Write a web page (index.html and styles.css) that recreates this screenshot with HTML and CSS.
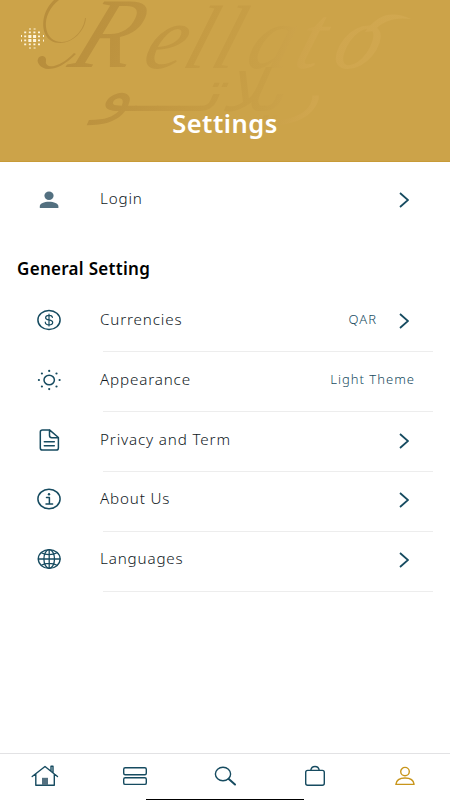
FILE: index.html
```html
<!DOCTYPE html>
<html lang="en">
<head>
<meta charset="utf-8">
<meta name="viewport" content="width=device-width">
<title>Settings</title>
<link rel="stylesheet" href="styles.css">
</head>
<body>
<header class="hero">
  <svg class="watermark" viewBox="0 0 450 161" aria-hidden="true">
    <defs>
      <linearGradient id="fade" gradientUnits="userSpaceOnUse" x1="30" y1="0" x2="420" y2="0">
        <stop offset="0" stop-color="#b78d3b"/>
        <stop offset=".22" stop-color="#be9440"/>
        <stop offset=".4" stop-color="#c59b43"/>
        <stop offset=".6" stop-color="#c9a047"/>
        <stop offset=".72" stop-color="#d0a64e"/>
        <stop offset="1" stop-color="#d1a850"/>
      </linearGradient>
    </defs>
    <g fill="url(#fade)">
      <path d="M86 18C85 31 73 43 60 43C46 43 41 30 44 17C46 9 50 4 54 0H59C50 7 45 17 46 27C47 36 53 42 62 42C73 42 84 30 85 18ZM76 54C65 65 56 69 48 69C41 69 36 62 38 59C40 54 47 56 46 61C45 65 49 67 54 66C62 64 68 59 74 53Z"/>
      <text class="latin initial" transform="translate(0 67) skewX(-23)" x="66">R</text>
      <text class="latin" transform="translate(0 68) skewX(-18)"><tspan x="140">e</tspan><tspan x="180">l</tspan><tspan x="208">l</tspan><tspan x="243">a</tspan><tspan x="291">t</tspan><tspan x="329">o</tspan></text>
      <path d="M365 32C377 15 391 10 411 19C396 17 383 20 374 31Z"/>
      <text class="arabic" transform="translate(0 111) skewX(-24)" x="96" textLength="222" lengthAdjust="spacingAndGlyphs">ريلاتـــو</text>
    </g>
  </svg>
  <svg class="dots" viewBox="0 0 23 21" stroke="#fff5dc" stroke-dasharray="2 2.6" fill="none" aria-hidden="true">
    <path stroke-width="1" d="M8 1H17M8 20H17M.5 7V16M22.5 7V16"/>
    <path stroke-width="1.8" d="M3.2 4.4H20M3.2 8.3H20M3.2 12.4H20M3.2 16.4H20"/>
    <path stroke-width="3" stroke-dasharray="3 1.7" d="M7.4 8.4H16M7.4 12.5H16"/>
  </svg>
  <h1>Settings</h1>
</header>
<main>
  <a class="row login">
    <svg class="icon" viewBox="0 0 24 22"><g fill="#537080"><ellipse cx="12" cy="6.8" rx="4.6" ry="4.2"/><path d="M2.8 18.9V17C3 14.5 7 12.8 12 12.8S21 14.5 21.4 17V18.9Z"/></g></svg>
    <span class="label">Login</span>
    <svg class="chevron" viewBox="0 0 10 16"><path d="M1 1L9 8L1 15"/></svg>
  </a>
  <h2>General Setting</h2>
  <div class="row">
    <svg class="icon" viewBox="0 0 24 22"><ellipse cx="12" cy="11" rx="11.1" ry="9.6"/><path stroke-width="1.2" d="M15.4 8.3C15.1 6.9 13.9 6.4 12 6.4C10 6.4 8.6 7.2 8.6 8.7C8.6 12 15.7 9.9 15.7 13.4C15.7 15 14.2 15.8 12 15.8C9.8 15.8 8.4 14.9 8.3 13.2M12 5V17"/></svg>
    <span class="label">Currencies</span><span class="value">QAR</span>
    <svg class="chevron" viewBox="0 0 10 16"><path d="M1 1L9 8L1 15"/></svg>
  </div>
  <div class="row">
    <svg class="icon" viewBox="0 0 24 22"><ellipse cx="12.2" cy="11" rx="5.2" ry="4.7"/><g fill="#164b60" stroke="none"><circle cx="12.2" cy="1.9" r="1.1"/><circle cx="12.2" cy="20.1" r="1.1"/><circle cx="1.9" cy="11" r="1.1"/><circle cx="22.6" cy="11" r="1.1"/><circle cx="4.9" cy="4.5" r="1.1"/><circle cx="19.5" cy="4.5" r="1.1"/><circle cx="4.9" cy="17.5" r="1.1"/><circle cx="19.5" cy="17.5" r="1.1"/></g></svg>
    <span class="label">Appearance</span><span class="value last">Light Theme</span>
  </div>
  <div class="row">
    <svg class="icon" viewBox="0 0 24 22"><path d="M12.5 .9H5.5Q3.3 .9 3.3 3V19Q3.3 21.1 5.5 21.1H19.2Q21.4 21.1 21.4 19V8.5L12.5 .9V6.5Q12.5 8.7 14.8 8.7H21.2M7.3 12.8H17.3M7.3 16.8H17.3"/></svg>
    <span class="label">Privacy and Term</span>
    <svg class="chevron" viewBox="0 0 10 16"><path d="M1 1L9 8L1 15"/></svg>
  </div>
  <div class="row">
    <svg class="icon" viewBox="0 0 24 22"><ellipse cx="12" cy="11" rx="11.1" ry="9.7"/><path d="M9.5 9.6H12.4V15.9M9 16H15.6"/><circle cx="12" cy="6.2" r="1.2" fill="#164b60" stroke="none"/></svg>
    <span class="label">About Us</span>
    <svg class="chevron" viewBox="0 0 10 16"><path d="M1 1L9 8L1 15"/></svg>
  </div>
  <div class="row">
    <svg class="icon" viewBox="0 0 24 22"><g stroke-width="1.3"><ellipse cx="12.2" cy="11" rx="10.9" ry="9.4"/><ellipse cx="12.2" cy="11" rx="5.3" ry="9.4"/><path d="M12.2 1.6V20.4M1.3 11H23.1M4.4 4.7C8 7.2 16 7.2 20 4.7M4.4 17.3C8 14.8 16 14.8 20 17.3"/></g></svg>
    <span class="label">Languages</span>
    <svg class="chevron" viewBox="0 0 10 16"><path d="M1 1L9 8L1 15"/></svg>
  </div>
</main>
<nav class="tabs">
  <a><svg viewBox="0 0 28 22"><path d="M1.2 11.5L14 1.5L26.5 11.5M4.8 9V20.2H23.3V9M20 6V1.3H22V7.5"/><path fill="#537080" stroke="none" d="M11 20.2V12.8H17V20.2Z"/></svg></a>
  <a><svg viewBox="0 0 28 22"><rect x="2.7" y="2.7" width="22.6" height="7" rx="1.5"/><rect x="2.7" y="12.7" width="22.6" height="6.7" rx="1.5"/></svg></a>
  <a><svg viewBox="0 0 28 22"><ellipse cx="12" cy="9" rx="7.6" ry="6.8"/><path d="M17.5 13.8L24 19.5" stroke-width="2"/></svg></a>
  <a><svg viewBox="0 0 28 22"><rect x="4.7" y="5.4" width="18.6" height="14.9" rx="2"/><path d="M9.8 5.3C10.2 2.8 11.8 1.5 14 1.5S17.8 2.8 18.2 5.3"/></svg></a>
  <a><svg class="active" viewBox="0 0 28 22"><ellipse cx="14" cy="6.6" rx="4.3" ry="4.2"/><path d="M4.9 19.4C5.3 15.5 8.8 13 14 13S22.7 15.5 23.1 19.4Z"/></svg></a>
</nav>
<div class="home-indicator"></div>
</body>
</html>
```

FILE: styles.css
```css
* { box-sizing: border-box; }
body {
  margin: 0;
  height: 800px;
  display: flex;
  flex-direction: column;
  position: relative;
  overflow: hidden;
  background: #fff;
  color: #11191e;
  font-family: "Noto Sans", "Open Sans", sans-serif;
}
svg { display: block; fill: none; }
.hero {
  height: 161.5px;
  flex: none;
  position: relative;
  background: #cca349;
  border-bottom: 1px solid #c89b37;
}
.watermark { position: absolute; top: 0; left: 0; width: 450px; height: 161px; }
.latin { font: italic 90px "Liberation Serif", serif; }
.initial { font-size: 100px; }
.arabic { font: 58px "DejaVu Sans", sans-serif; }
.dots { position: absolute; left: 21px; top: 28px; width: 23px; height: 21px; }
h1 {
  position: relative;
  margin: 0;
  padding-top: 106px;
  text-align: center;
  color: #fff;
  font-size: 25.5px;
  line-height: 34px;
  font-weight: 600;
  letter-spacing: .5px;
}
main { flex: 1; }
.row {
  display: flex;
  align-items: center;
  height: 59.8px;
  padding: 0 40px 5px 36px;
  background: linear-gradient(#ededed, #ededed) 103px 100% / 330px 1px no-repeat;
}
.login { height: 65px; margin-top: 3px; padding: 4px 40px 0 36px; background: none; }
.login .icon { position: relative; top: 1px; }
h2 {
  margin: 0;
  padding: 26px 0 0 17px;
  height: 63.2px;
  color: #000;
  font-size: 17px;
  line-height: 26px;
  font-weight: 600;
  letter-spacing: .3px;
}
.icon { width: 24px; height: 22px; margin-left: 1px; margin-right: 39px; overflow: visible; stroke: #164b60; stroke-width: 1.5; stroke-linecap: round; stroke-linejoin: round; }
.login .icon { stroke: none; }
.label {
  font-size: 15.2px;
  line-height: 22px;
  font-weight: 350;
  letter-spacing: .85px;
  position: relative;
  top: -1px;
}
.value { margin-left: auto; margin-right: 22px; position: relative; top: -1px; color: #164b60; font-size: 13px; font-weight: 300; letter-spacing: 1px; }
.value.last { margin-right: -5px; }
.chevron { width: 10px; height: 16px; margin-left: auto; margin-right: 1px; stroke: #164b60; stroke-width: 1.8; position: relative; top: 1px; }
.value + .chevron { margin-left: 0; }
.tabs { height: 47px; display: grid; grid-template-columns: repeat(5, 1fr); border-top: 1px solid #e2e2e4; }
.tabs a { display: flex; justify-content: center; padding-top: 11px; }
.tabs svg { width: 28px; height: 22px; stroke: #164b60; stroke-width: 1.4; stroke-linejoin: round; stroke-linecap: round; }
.tabs .active { stroke: #c8951b; }
.home-indicator { position: absolute; left: 146px; bottom: 0; width: 158px; height: 1.5px; background: #000; }
```
